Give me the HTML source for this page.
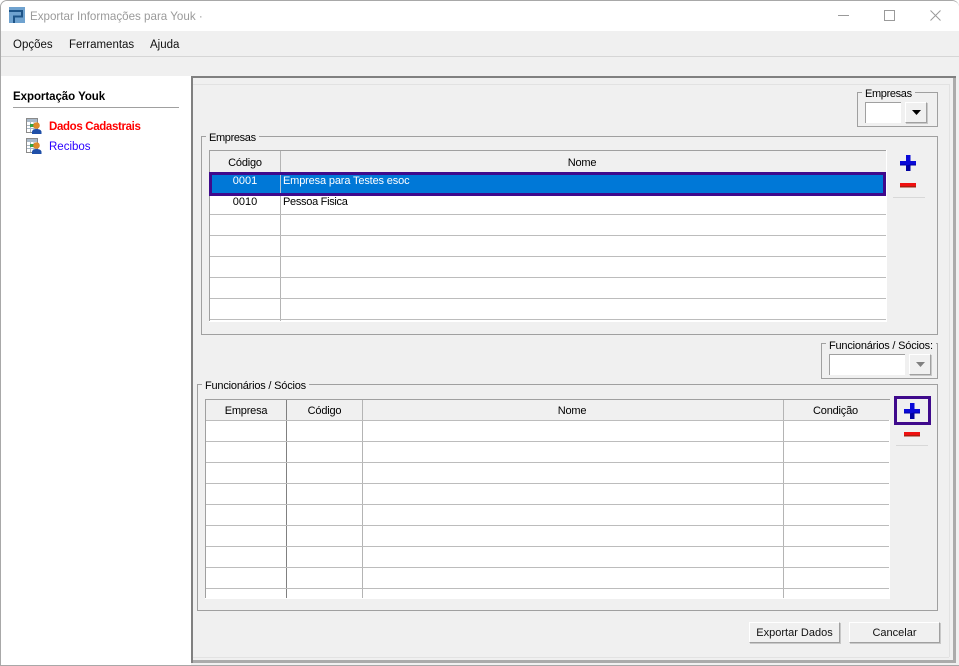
<!DOCTYPE html>
<html><head><meta charset="utf-8">
<style>
html,body{margin:0;padding:0;width:959px;height:666px;overflow:hidden;background:#fff}
body{position:relative;font-family:"Liberation Sans",sans-serif;font-size:11px;color:#000}
div,span.t{position:absolute;box-sizing:border-box}
.t{white-space:nowrap;line-height:14px}
.g{border:1px solid #a0a0a0}
.lg{background:#f0f0f0;padding:0 3px;white-space:nowrap;line-height:14px;font-size:11px}
.h{background:#bcbcbc;height:1px}
.v{background:#b4b4b4;width:1px}
.c{text-align:center;line-height:14px;white-space:nowrap}
.hd{letter-spacing:-.2px}
.btn{background:#f0f0f0;border:1px solid;border-color:#fff #a0a0a0 #a0a0a0 #fff;box-shadow:1px 1px 0 #c8c8c8;text-align:center;line-height:21px;font-size:11px;color:#111}
svg{position:absolute;display:block}
</style></head>
<body>
<!-- window -->
<div style="left:0;top:0;width:959px;height:666px;background:#f0f0f0;border:1px solid #a8a8a8;border-radius:7px 7px 0 0;border-right:0;overflow:hidden">
<div style="left:0;top:0;width:958px;height:30px;background:#fff"></div>
</div>
<svg style="left:9px;top:7px" width="16" height="16" viewBox="0 0 16 16"><rect width="16" height="16" fill="#6fa2cf"/><path d="M0 4h13v5.500H5V16" stroke="#1d5488" stroke-width="2" fill="none"/></svg>
<span class="t" style="left:30px;top:10px;font-size:11.600px;color:#9a9a9a">Exportar Informações para Youk ·</span>
<svg style="left:830px;top:4px" width="120" height="24" fill="none" stroke="#9a9a9a" stroke-width="1"><path d="M8 11.500h11M54.500 6.500h10v10h-10zM100.500 6.500l10 10M110.500 6.500l-10 10"/></svg>
<!-- menu -->
<span class="t" style="left:13px;top:38px;font-size:11.500px;color:#111">Opções</span>
<span class="t" style="left:69px;top:38px;font-size:11.500px;color:#111">Ferramentas</span>
<span class="t" style="left:150px;top:38px;font-size:11.500px;color:#111">Ajuda</span>
<div class="h" style="left:1px;top:56px;width:958px;background:#d6d6d6"></div>
<!-- sidebar -->
<div style="left:1px;top:76px;width:190px;height:589px;background:#fff"></div>
<span class="t" style="left:13px;top:90px;font-size:11.500px;font-weight:bold;letter-spacing:-.05px">Exportação Youk</span>
<div class="h" style="left:13px;top:107px;width:166px;background:#a0a0a0"></div>
<svg style="left:26px;top:118px" width="17" height="16" viewBox="0 0 17 16"><rect x=".5" y=".5" width="11" height="14" fill="#fff" stroke="#8a8a8a"/><rect x="1" y="1" width="10" height="3" fill="#a9b9c9"/><path d="M1 7.500h10M1 10.500h10M4.500 4v10M8 4v10" stroke="#a8b8c8"/><rect x="4" y="6" width="4" height="3" fill="#3aa040"/><path d="M6 16v-2c0-2 2-3 4.500-3s5 1 5 3v2z" fill="#1f4fa8"/><circle cx="10.500" cy="7.500" r="3.300" fill="#dd8a2a"/></svg>
<svg style="left:26px;top:138px" width="17" height="16" viewBox="0 0 17 16"><rect x=".5" y=".5" width="11" height="14" fill="#fff" stroke="#8a8a8a"/><rect x="1" y="1" width="10" height="3" fill="#a9b9c9"/><path d="M1 7.500h10M1 10.500h10M4.500 4v10M8 4v10" stroke="#a8b8c8"/><rect x="4" y="6" width="4" height="3" fill="#3aa040"/><path d="M6 16v-2c0-2 2-3 4.500-3s5 1 5 3v2z" fill="#1f4fa8"/><circle cx="10.500" cy="7.500" r="3.300" fill="#dd8a2a"/></svg>
<span class="t" style="left:49px;top:120px;font-size:11.500px;font-weight:bold;color:#f00;letter-spacing:-.35px">Dados Cadastrais</span>
<span class="t" style="left:49px;top:140px;font-size:11.500px;color:#2a00ff">Recibos</span>
<!-- panel frame -->
<div style="left:191px;top:76px;width:2px;height:587px;background:#808080"></div>
<div style="left:191px;top:76px;width:765px;height:2px;background:#808080"></div>
<div class="h" style="left:193px;top:84px;width:756px;background:#e2e2e2"></div>
<div class="v" style="left:949px;top:84px;height:573px;background:#e2e2e2"></div>
<div class="h" style="left:193px;top:657px;width:756px;background:#e2e2e2"></div>
<div style="left:953px;top:78px;width:3px;height:585px;background:#ababab"></div>
<div style="left:193px;top:660px;width:763px;height:3px;background:#ababab"></div>
<div class="h" style="left:0;top:665px;width:959px;background:#a8a8a8"></div>
<!-- empresas combo -->
<div class="g" style="left:857px;top:92px;width:81px;height:35px"></div>
<div class="lg" style="left:862px;top:87px;letter-spacing:-.35px">Empresas</div>
<div style="left:865px;top:102px;width:36px;height:21px;background:#fff;border-top:1px solid #a0a0a0;border-left:1px solid #a0a0a0"></div>
<div class="btn" style="left:905px;top:102px;width:22px;height:21px"></div>
<svg style="left:912px;top:110px" width="10" height="6"><path d="M0 0h9L4.500 5z" fill="#000"/></svg>
<!-- group 1 -->
<div class="g" style="left:201px;top:136px;width:737px;height:199px"></div>
<div class="lg" style="left:206px;top:131px;letter-spacing:-.35px">Empresas</div>
<div style="left:209px;top:150px;width:678px;height:172px;background:#fff"></div>
<div style="left:209px;top:150px;width:677px;height:22px;background:#f0f0f0"></div>
<div class="h" style="left:209px;top:150px;width:677px;background:#a0a0a0"></div>
<div class="v" style="left:209px;top:150px;height:171px;background:#a0a0a0"></div>
<div class="v" style="left:280px;top:151px;height:170px"></div>
<div class="h" style="left:210px;top:214px;width:676px"></div>
<div class="h" style="left:210px;top:235px;width:676px"></div>
<div class="h" style="left:210px;top:256px;width:676px"></div>
<div class="h" style="left:210px;top:277px;width:676px"></div>
<div class="h" style="left:210px;top:298px;width:676px"></div>
<div class="h" style="left:210px;top:319px;width:676px"></div>
<div class="c hd" style="left:210px;top:156px;width:70px">Código</div>
<div class="c hd" style="left:280px;top:156px;width:604px">Nome</div>
<div style="left:209px;top:172px;width:677px;height:24px;background:#0078d7;border:3px solid #3f0a8c"></div>
<div class="v" style="left:280px;top:175px;height:18px;background:#b8c8d8"></div>
<div class="c" style="left:210px;top:174px;width:70px;color:#fff">0001</div>
<span class="t" style="left:283px;top:174px;color:#fff;letter-spacing:-.15px">Empresa para Testes esoc</span>
<div class="c" style="left:210px;top:195px;width:70px">0010</div>
<span class="t" style="left:283px;top:195px;letter-spacing:-.3px">Pessoa Fisica</span>
<svg style="left:900px;top:155px" width="16" height="16"><path d="M6 0h4.500v6H16v4.500h-5.500V16H6v-5.500H0V6h6z" fill="#0a0ad8"/><path d="M6 10.500V16h4.500v-5.500H16v-1h-5.500zM0 9.500h6v1H0z" fill="#0000a0"/></svg>
<svg style="left:900px;top:183px" width="16" height="5"><rect width="16" height="3" fill="#f01010"/><rect y="3" width="16" height="1.500" fill="#a82010"/></svg>
<div class="h" style="left:893px;top:197px;width:32px;background:#d8d8d8"></div>
<!-- func combo -->
<div class="g" style="left:821px;top:343px;width:117px;height:36px"></div>
<div class="lg" style="left:826px;top:339px;letter-spacing:-.2px">Funcionários / Sócios:</div>
<div style="left:829px;top:354px;width:76px;height:21px;background:#fff;border-top:1px solid #a0a0a0;border-left:1px solid #a0a0a0"></div>
<div class="btn" style="left:909px;top:354px;width:22px;height:21px"></div>
<svg style="left:916px;top:362px" width="10" height="6"><path d="M0 0h9L4.500 5z" fill="#808080"/></svg>
<!-- group 2 -->
<div class="g" style="left:197px;top:384px;width:741px;height:227px"></div>
<div class="lg" style="left:202px;top:379px;letter-spacing:-.2px">Funcionários / Sócios</div>
<div style="left:205px;top:399px;width:685px;height:200px;background:#fff"></div>
<div style="left:205px;top:399px;width:685px;height:21px;background:#f0f0f0"></div>
<div class="h" style="left:205px;top:399px;width:685px;background:#a0a0a0"></div>
<div class="v" style="left:205px;top:399px;height:199px;background:#a0a0a0"></div>
<div class="v" style="left:286px;top:400px;height:198px;background:#808080"></div>
<div class="v" style="left:362px;top:400px;height:198px"></div>
<div class="v" style="left:783px;top:400px;height:198px"></div>
<div class="h" style="left:206px;top:420px;width:683px"></div>
<div class="h" style="left:206px;top:441px;width:683px"></div>
<div class="h" style="left:206px;top:462px;width:683px"></div>
<div class="h" style="left:206px;top:483px;width:683px"></div>
<div class="h" style="left:206px;top:504px;width:683px"></div>
<div class="h" style="left:206px;top:525px;width:683px"></div>
<div class="h" style="left:206px;top:546px;width:683px"></div>
<div class="h" style="left:206px;top:567px;width:683px"></div>
<div class="h" style="left:206px;top:588px;width:683px"></div>
<div class="c hd" style="left:206px;top:404px;width:80px">Empresa</div>
<div class="c hd" style="left:287px;top:404px;width:75px">Código</div>
<div class="c hd" style="left:363px;top:404px;width:418px">Nome</div>
<div class="c hd" style="left:784px;top:404px;width:103px">Condição</div>
<div style="left:894px;top:396px;width:37px;height:29px;border:3px solid #3f0a8c"></div>
<svg style="left:904px;top:403px" width="16" height="16"><path d="M6 0h4.500v6H16v4.500h-5.500V16H6v-5.500H0V6h6z" fill="#0a0ad8"/><path d="M6 10.500V16h4.500v-5.500H16v-1h-5.500zM0 9.500h6v1H0z" fill="#0000a0"/></svg>
<svg style="left:904px;top:432px" width="16" height="5"><rect width="16" height="3" fill="#f01010"/><rect y="3" width="16" height="1.500" fill="#a82010"/></svg>
<div class="h" style="left:896px;top:445px;width:32px;background:#d8d8d8"></div>
<!-- buttons -->
<div class="btn" style="left:749px;top:622px;width:91px;height:21px">Exportar Dados</div>
<div class="btn" style="left:849px;top:622px;width:91px;height:21px">Cancelar</div>
</body></html>
